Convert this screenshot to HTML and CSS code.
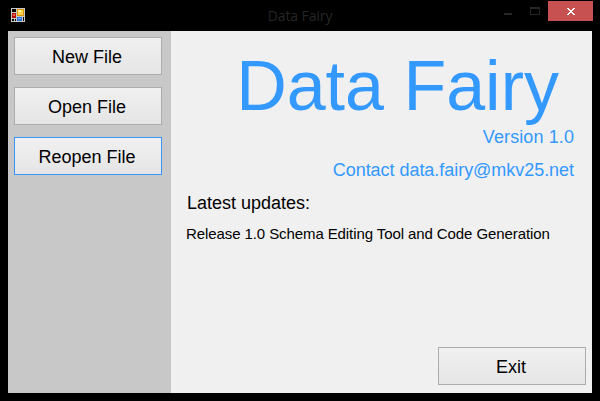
FILE: index.html
```html
<!DOCTYPE html>
<html lang="en">
<head>
<meta charset="utf-8">
<title>Data Fairy</title>
<link rel="stylesheet" href="styles.css">
</head>
<body>
<div class="window">
  <header class="titlebar">
    <svg class="app-icon" width="14" height="14" viewBox="0 0 14 14" shape-rendering="crispEdges">
      <path fill="#c8c8c8" d="M0 0h14v14H0z"/>
      <path fill="#000" d="M1 1h4v3H1zM1 11h2v2H1zM4 11h1v2H4zM12 9h1v4h-1z"/>
      <path fill="#b00c0c" d="M1 5h4v5H1z"/>
      <path fill="#f06050" d="M2 6h2v2H2z"/>
      <path fill="#d89500" d="M6 1h7v7H6z"/>
      <path fill="#ffd24a" d="M7 2h5v5H7z"/>
      <path fill="#ffefb0" d="M7 2h3v2H7z"/>
      <path fill="#2f6fd8" d="M6 9h5v4H6z"/>
      <path fill="#7db2ff" d="M7 10h3v1H7z"/>
    </svg>
    <div class="caption">Data Fairy</div>
    <div class="controls">
      <svg class="glyph" width="58" height="21" viewBox="0 0 58 21" shape-rendering="crispEdges">
        <path fill="#262626" d="M14 12h8v2h-8zM40 6h10v8H40zM41 8v5h8V8z" fill-rule="evenodd"/>
      </svg>
      <div class="close">
        <svg width="8" height="7" viewBox="0 0 8 7" shape-rendering="crispEdges">
          <path fill="#fff" d="M0 0h2v1h1v1h2V1h1V0h2v1H7v1H6v1H5v1h1v1h1v1h1v1H6V6H5V5H3v1H2v1H0V6h1V5h1V4h1V3H2V2H1V1H0z"/>
        </svg>
      </div>
    </div>
  </header>
  <main class="client">
    <nav class="sidebar">
      <button class="btn">New File</button>
      <button class="btn">Open File</button>
      <button class="btn focused">Reopen File</button>
    </nav>
    <section class="content">
      <h1 class="title">Data Fairy</h1>
      <p class="version">Version 1.0</p>
      <p class="contact">Contact data.fairy@mkv25.net</p>
      <h2 class="updates">Latest updates:</h2>
      <p class="release">Release 1.0 Schema Editing Tool and Code Generation</p>
      <button class="btn exit">Exit</button>
    </section>
  </main>
</div>
</body>
</html>
```
FILE: styles.css
```css
* { box-sizing: border-box; }
body { margin: 0; background: #000; font-family: "Liberation Sans", Arial, sans-serif; }
h1, h2, p { margin: 0; font-weight: normal; white-space: nowrap; }
.window { width: 600px; height: 401px; padding: 0 8px 8px; background: #000; display: flex; flex-direction: column; }
.titlebar { height: 31px; display: grid; grid-template-columns: 100px 1fr 102px; align-items: start; }
.app-icon { margin: 8px 0 0 3px; }
.caption { text-align: center; color: #262626; font: 14px/20px "Open Sans", sans-serif; letter-spacing: -0.1px; padding: 6px 0 0 2px; }
.controls { display: flex; }
.glyph { flex: none; margin-top: 1px; }
.close { flex: none; width: 45px; height: 20px; margin-top: 1px; padding: 1px 0 0 1px; background: #c75050; display: flex; align-items: center; justify-content: center; }
.client { flex: 1; display: flex; }
.sidebar { width: 163px; padding: 6px; background: #c8c8c8; display: flex; flex-direction: column; gap: 12px; }
.btn { width: 148px; height: 38px; flex: none; padding: 2px 2px 0 0; border: 1px solid #acacac; border-radius: 0; background: linear-gradient(#f0f0f0, #e5e5e5); color: #000; font: 18px/20px "Liberation Sans", Arial, sans-serif; }
.focused { border-color: #3399ff; }
.content { flex: 1; background: #f0f0f0; padding: 15px 6px 8px 16px; display: flex; flex-direction: column; }
.title { color: #3399ff; font-size: 70px; line-height: 81px; text-align: right; padding-right: 27px; }
.version, .contact { color: #3399ff; font-size: 18px; line-height: 20px; text-align: right; padding-right: 12px; }
.version { letter-spacing: 0.1px; }
.contact { margin-top: 13px; letter-spacing: -0.04px; }
.updates { font-size: 18px; line-height: 20px; margin-top: 13px; }
.release { font-size: 15px; line-height: 18px; margin: 12px 0 0 -1px; letter-spacing: -0.09px; }
.exit { align-self: flex-end; margin-top: auto; }
```
